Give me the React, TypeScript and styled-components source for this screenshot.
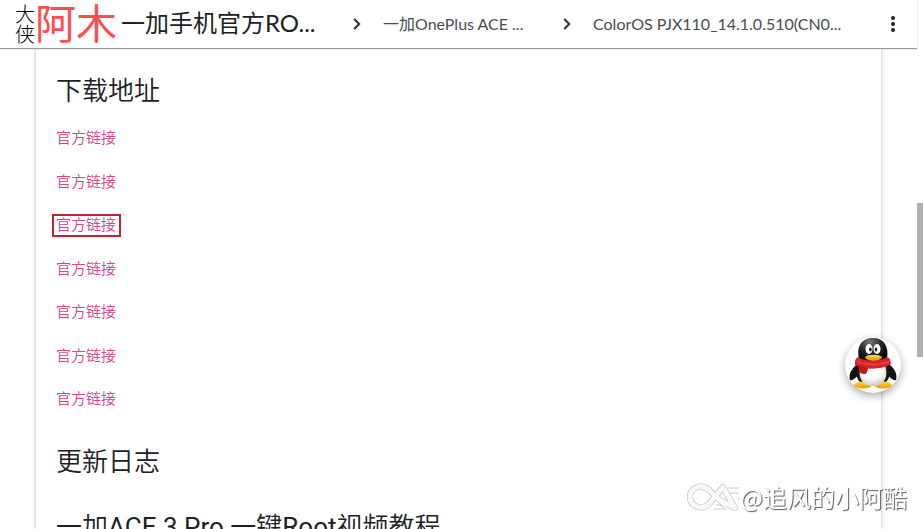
import React from 'react';
import styled, { createGlobalStyle } from 'styled-components';

const GlobalStyle = createGlobalStyle`
  * { box-sizing: border-box; }
  body {
    margin: 0;
    background: #fff;
    color: #202124;
    font-family: Roboto, "Noto Sans CJK SC", sans-serif;
  }
`;

const Shell = styled.div`
  display: flex;
  height: 100vh;
  overflow: hidden;
`;

const Page = styled.div`
  display: flex;
  flex-direction: column;
  flex: 1;
  min-width: 0;
`;

const Header = styled.header`
  position: relative;
  z-index: 1;
  display: flex;
  align-items: center;
  flex: none;
  height: 48px;
  padding: 0 16px 0 15px;
  background: #fff;
  box-shadow: 0 1px 1px #999c9a;
  font-family: Lato, "Noto Sans CJK SC", sans-serif;
`;

const Brand = styled.a`
  display: flex;
  align-items: center;
  flex: none;
  width: 106px;
  color: #000;
  text-decoration: none;
`;

const BrandSide = styled.span`
  width: 20px;
  font-size: 20px;
  font-weight: 300;
  line-height: 20px;
`;

const BrandName = styled.span`
  color: #ff4d4f;
  font-size: 41px;
  line-height: 48px;
  white-space: nowrap;
`;

const Crumbs = styled.nav`
  display: flex;
  align-items: center;
  flex: 1;
  min-width: 0;
  white-space: nowrap;
`;

const Title = styled.a`
  flex: none;
  width: 224px;
  padding-bottom: 2px;
  color: #202124;
  font-size: 24px;
  line-height: 46px;
  text-decoration: none;
`;

const Crumb = styled.a<{ $width: number }>`
  flex: none;
  width: ${(p) => p.$width}px;
  color: #4a4d51;
  font-size: 16px;
  line-height: 48px;
  text-decoration: none;
`;

const Chevron = styled.svg`
  flex: none;
  width: 24px;
  height: 24px;
  margin-right: 14px;
  fill: none;
  stroke: #303134;
  stroke-width: 2;
`;

const MenuButton = styled.button`
  display: flex;
  flex: none;
  padding: 4px 0;
  border: 0;
  background: none;
  fill: #202124;
`;

const Card = styled.main`
  flex: 1;
  min-height: 0;
  margin: 0 36px;
  padding: 23px 20px 0;
  background: #fff;
  box-shadow: 0 0 4px #b5b5b5;
`;

const Heading = styled.h2`
  margin: 0;
  font-size: 26px;
  font-weight: 350;
  line-height: 40px;
`;

const Latin = styled.span`
  font-weight: 400;
`;

const Links = styled.ul`
  display: flex;
  flex-direction: column;
  align-items: flex-start;
  justify-content: space-between;
  height: 284px;
  margin: 16px 0 31px;
  padding: 0;
  list-style: none;
`;

const Link = styled.a<{ $marked?: boolean }>`
  display: block;
  margin: 0 -4px;
  padding: 0 5px 0 4px;
  color: #d9448a;
  font-size: 15px;
  font-weight: 350;
  line-height: 23px;
  text-decoration: none;
  outline: ${(p) => (p.$marked ? '2px solid #c4242b' : 'none')};
  outline-offset: -2px;
`;

const Section = styled.section`
  & + & { margin-top: 25px; }
`;

const Track = styled.div`
  flex: none;
  width: 6px;
  padding-top: 203px;
`;

const Thumb = styled.div`
  height: 154px;
  background: #b0b0b0;
`;

const ChatButton = styled.button`
  position: fixed;
  z-index: 2;
  right: 22px;
  bottom: 136px;
  width: 56px;
  height: 56px;
  padding: 0;
  border: 0;
  border-radius: 50%;
  background: #fff;
  box-shadow: 0 3px 8px rgba(0, 0, 0, 0.35);
`;

const Watermark = styled.div`
  position: fixed;
  right: 16px;
  bottom: 12px;
  display: flex;
  align-items: center;
  color: #fff;
  font-family: "Noto Sans CJK SC", sans-serif;
  font-size: 24px;
  line-height: 36px;
  text-shadow: 1px 1px 1px #555;
`;

const Owner = styled.span`
  padding-bottom: 2px;
`;

const ArrowIcon = () => (
  <Chevron viewBox="0 0 24 24" aria-hidden="true">
    <path d="M9.2 7l5 5-5 5" />
  </Chevron>
);

const Penguin = () => (
  <svg width="56" height="56" viewBox="0 0 56 56" aria-hidden="true">
    <defs>
      <radialGradient id="head" cx=".4" cy=".15" r=".8">
        <stop offset="0" stopColor="#777" />
        <stop offset=".5" stopColor="#252525" />
        <stop offset="1" stopColor="#050505" />
      </radialGradient>
      <radialGradient id="belly" cx=".45" cy=".3" r=".7">
        <stop offset=".5" stopColor="#fff" />
        <stop offset="1" stopColor="#c9c9c9" />
      </radialGradient>
      <linearGradient id="foot" x2="0" y2="1">
        <stop stopColor="#ffd84a" />
        <stop offset="1" stopColor="#ef9600" />
      </linearGradient>
    </defs>
    <path d="M14 26C8 30 3 36 5 43c2 1 6-2 9-6zM42 26c7 4 11 11 9 17-2 1-6-2-9-6z" fill="#111" />
    <path d="M11 27c-2 15 4 22 17 22s19-7 17-22z" fill="#151515" />
    <ellipse cx="18" cy="48" rx="9" ry="3.500" fill="url(#foot)" />
    <ellipse cx="38" cy="48" rx="9" ry="3.500" fill="url(#foot)" />
    <path d="M16 28c-4 12 1 21 12 21s16-9 12-21z" fill="url(#belly)" />
    <path d="M14 22C11 9 17 1 28 1s16 8 14 21c-6 6-22 6-28 0z" fill="url(#head)" />
    <ellipse cx="24" cy="12" rx="3.500" ry="5" fill="#fff" />
    <ellipse cx="32" cy="12" rx="3.500" ry="5" fill="#fff" />
    <ellipse cx="25.400" cy="12.500" rx="1.300" ry="2" fill="#111" />
    <ellipse cx="31" cy="12.500" rx="1.300" ry="2" fill="#111" />
    <path d="M13 20c8 5 21 5 29 0 3 1 4 4 4 7-9 6-27 6-36 1 0-4 0-6 3-8z" fill="#d9242b" />
    <path d="M14 28l9 3c-1 4-1 6-4 6-4 0-6-3-5-9z" fill="#c3161d" />
    <path d="M12 24c8 5 25 4 33 0" fill="none" stroke="#ed4b4b" strokeWidth="1.200" />
    <path d="M20 20c3-3 14-3 17 0-1 5-16 5-17 0z" fill="#f6a11a" />
    <path d="M21 19.500c4-2 11-2 15 0-4 1.500-11 1.500-15 0z" fill="#ffd04a" />
  </svg>
);

const WatermarkLogo = () => (
  <svg width="54" height="32" viewBox="0 0 54 32" aria-hidden="true">
    <g fill="none" strokeLinejoin="round">
      <path d="M42 6h11M44 11h9M28 27h13M30 23h8M52 17h2" stroke="#ccc" strokeWidth="1" />
      <path d="M40 24L23 8C15 1 4 6 4 15s11 14 19 7L37 5l12 21-13-7" stroke="#b5b5b5" strokeWidth="6" />
      <path d="M40 24L23 8C15 1 4 6 4 15s11 14 19 7L37 5l12 21-13-7" stroke="#f8f8f8" strokeWidth="5" />
    </g>
  </svg>
);

const rows = [1, 2, 3, 4, 5, 6, 7];

export default function App() {
  return (
    <>
      <GlobalStyle />
      <Shell>
        <Page>
          <Header>
            <Brand href="#">
              <BrandSide>大侠</BrandSide>
              <BrandName>阿木</BrandName>
            </Brand>
            <Crumbs>
              <Title href="#">一加手机官方RO...</Title>
              <ArrowIcon />
              <Crumb href="#" $width={172}>一加OnePlus ACE ...</Crumb>
              <ArrowIcon />
              <Crumb href="#" $width={256}>ColorOS PJX110_14.1.0.510(CN0...</Crumb>
            </Crumbs>
            <MenuButton aria-label="更多">
              <svg width="16" height="24" viewBox="0 0 16 24">
                <circle cx="8" cy="6" r="2" />
                <circle cx="8" cy="12" r="2" />
                <circle cx="8" cy="18" r="2" />
              </svg>
            </MenuButton>
          </Header>
          <Card>
            <Section>
              <Heading>下载地址</Heading>
              <Links>
                {rows.map((n) => (
                  <li key={n}>
                    <Link href="#" $marked={n === 3}>官方链接</Link>
                  </li>
                ))}
              </Links>
            </Section>
            <Section>
              <Heading>更新日志</Heading>
            </Section>
            <Section>
              <Heading>
                一加<Latin>ACE 3 Pro </Latin>一键<Latin>Root</Latin>视频教程
              </Heading>
            </Section>
          </Card>
        </Page>
        <Track>
          <Thumb />
        </Track>
      </Shell>
      <ChatButton aria-label="QQ">
        <Penguin />
      </ChatButton>
      <Watermark>
        <WatermarkLogo />
        <Owner>@追风的小阿酷</Owner>
      </Watermark>
    </>
  );
}
